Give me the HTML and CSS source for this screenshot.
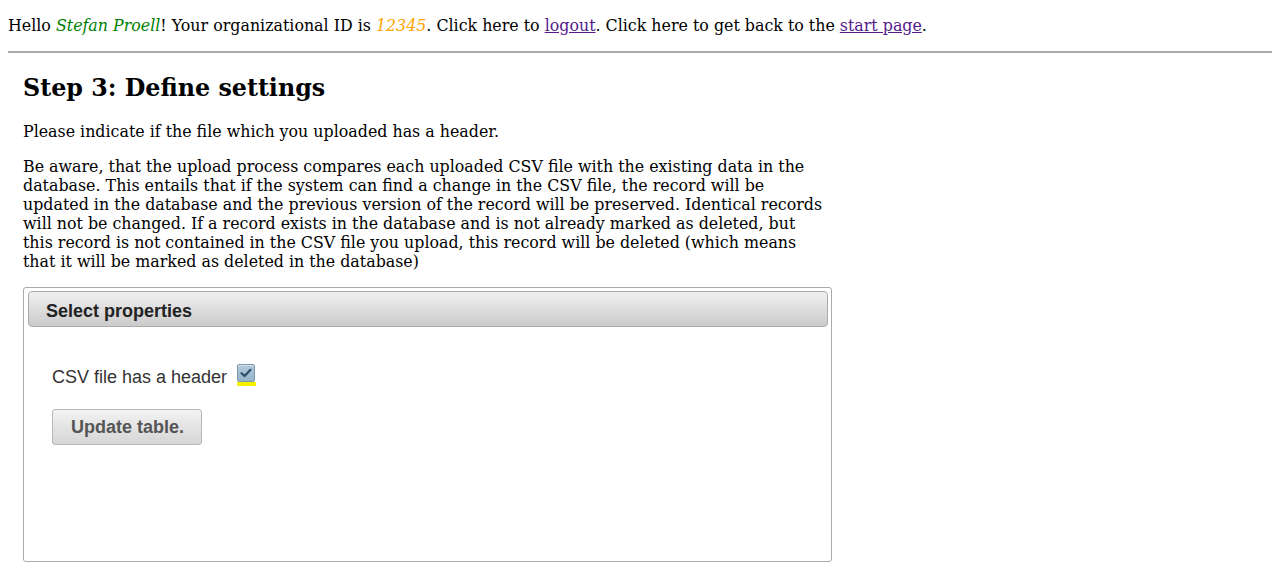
FILE: index.html
```html
<!DOCTYPE html>
<html>
<head>
<meta charset="utf-8">
<title>Step 3: Define settings</title>
<link rel="stylesheet" href="styles.css">
</head>
<body>
<p class="greeting">Hello <span class="user">Stefan Proell</span>! Your organizational ID is <span class="orgid">12345</span>. Click here to <a href="#">logout</a>. Click here to get back to the <a href="#">start page</a>.</p>
<hr class="divider">
<div class="content">
  <h2 class="title">Step 3: Define settings</h2>
  <p class="text">Please indicate if the file which you uploaded has a header.</p>
  <p class="text">Be aware, that the upload process compares each uploaded CSV file with the existing data in the database. This entails that if the system can find a change in the CSV file, the record will be updated in the database and the previous version of the record will be preserved. Identical records will not be changed. If a record exists in the database and is not already marked as deleted, but this record is not contained in the CSV file you upload, this record will be deleted (which means that it will be marked as deleted in the database)</p>
  <div class="panel">
    <div class="panel-header">Select properties</div>
    <div class="panel-body">
      <div class="check-row">
        <span class="check-label">CSV file has a header</span>
        <span class="check-wrap">
          <span class="check-box">
            <svg width="12" height="10" viewBox="0 0 12 10"><path d="M1.5 5.2 L4.6 8 L10.5 1.8" fill="none" stroke="#2f4d68" stroke-width="2.2" stroke-linecap="round" stroke-linejoin="round"/></svg>
          </span>
          <span class="check-mark-bar"></span>
        </span>
      </div>
      <button class="update-btn" type="button">Update table.</button>
    </div>
  </div>
</div>
</body>
</html>
```

FILE: styles.css
```css
body {
  margin: 8px;
  font-family: "DejaVu Serif", serif;
  font-size: 15.85px;
  color: #000;
  background: #fff;
}

.greeting {
  margin: 8px 0 16px;
  line-height: 19px;
}

.user {
  color: #008000;
  font-style: italic;
}

.orgid {
  color: #ffa500;
  font-style: italic;
}

.greeting a {
  color: #551a8b;
}

.divider {
  margin: 0 0 8px;
  border: 0;
  height: 2px;
  background: #aaaaaa;
}

.content {
  margin-left: 15px;
  width: 809px;
}

.title {
  font-size: 23.77px;
  font-weight: bold;
  margin: 21px 0 20px;
  line-height: 28px;
}

.text {
  margin: 0 0 16px;
  line-height: 19px;
  width: 800px;
}

.panel {
  box-sizing: border-box;
  height: 275px;
  border: 1px solid #aaaaaa;
  border-radius: 3px;
  padding: 3px 3px 3px 4px;
  margin-top: 16px;
  font-family: "Liberation Sans", Arial, sans-serif;
}

.panel-header {
  border: 1px solid #aaaaaa;
  border-radius: 4px;
  background: linear-gradient(#f0f0f0, #cbcbcb);
  color: #222222;
  font-weight: bold;
  font-size: 18px;
  line-height: 20px;
  padding: 9px 17px 5px;
}

.panel-body {
  padding: 40px 24px 0;
}

.check-row {
  display: flex;
  align-items: flex-start;
  gap: 10px;
}

.check-label {
  font-size: 18px;
  line-height: 21px;
  color: #333333;
}

.check-wrap {
  display: flex;
  flex-direction: column;
  margin-top: -3px;
}

.check-box {
  box-sizing: border-box;
  width: 18px;
  height: 18px;
  border: 1px solid #7d98ae;
  border-radius: 2px;
  background: linear-gradient(#b3cadb, #96b3c9);
  box-shadow: inset 0 1px 0 #d0dfea;
  display: flex;
  align-items: center;
  justify-content: center;
}

.check-mark-bar {
  width: 19px;
  height: 4px;
  background: #f5f000;
}

.update-btn {
  margin-top: 21px;
  font-family: "Liberation Sans", Arial, sans-serif;
  font-size: 18px;
  font-weight: bold;
  line-height: 20px;
  color: #555555;
  padding: 7px 17px 7px 18px;
  border: 1px solid #b8b8b8;
  border-radius: 3px;
  background: linear-gradient(#f2f2f2, #d6d6d6);
  cursor: pointer;
}
```
